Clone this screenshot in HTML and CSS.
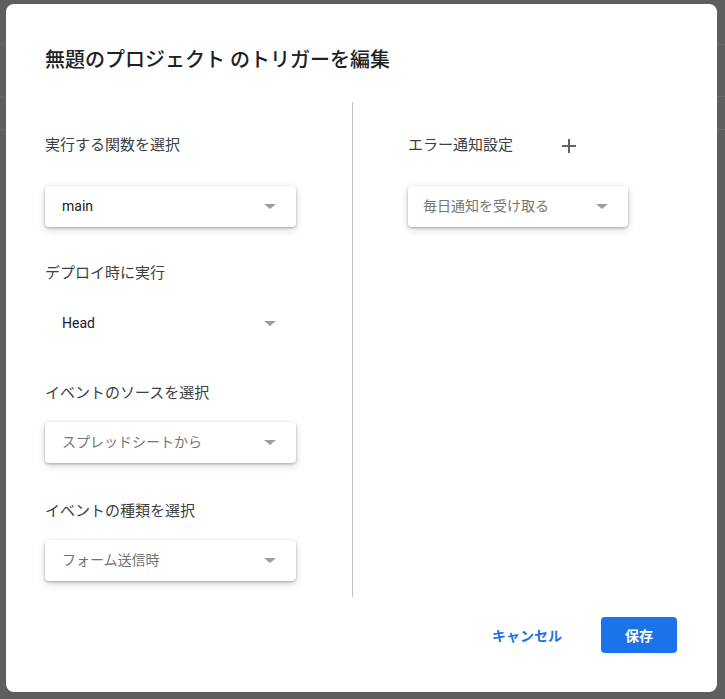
FILE: index.html
```html
<!DOCTYPE html>
<html lang="ja">
<head>
<meta charset="utf-8">
<title>トリガーを編集</title>
<link rel="stylesheet" href="styles.css">
</head>
<body>
<div class="dialog">
  <h1 class="title">無題のプロジェクト のトリガーを編集</h1>
  <div class="columns">
    <div class="col col-left">
      <div class="label-row first"><span class="label-text">実行する関数を選択</span></div>
      <div class="select raised gap-20"><span class="value">main</span><span class="arrow"></span></div>

      <div class="label gap-34">デプロイ時に実行</div>
      <div class="select flat gap-18"><span class="value">Head</span><span class="arrow"></span></div>

      <div class="label gap-37">イベントのソースを選択</div>
      <div class="select raised gap-17"><span class="value muted">スプレッドシートから</span><span class="arrow"></span></div>

      <div class="label gap-36">イベントの種類を選択</div>
      <div class="select raised gap-17"><span class="value muted">フォーム送信時</span><span class="arrow"></span></div>
    </div>
    <div class="col col-right">
      <div class="label-row first">
        <span class="label-text">エラー通知設定</span>
        <svg class="plus" width="16" height="16" viewBox="0 0 16 16" aria-hidden="true">
          <path d="M8 1v14M1 8h14" stroke="#5f6368" stroke-width="2" fill="none"/>
        </svg>
      </div>
      <div class="select raised narrow gap-20"><span class="value muted">毎日通知を受け取る</span><span class="arrow"></span></div>
    </div>
  </div>
  <div class="footer">
    <button class="btn btn-text">キャンセル</button>
    <button class="btn btn-primary">保存</button>
  </div>
</div>
</body>
</html>
```
FILE: styles.css
```css
html, body {
  margin: 0;
  padding: 0;
}
body {
  width: 725px;
  height: 699px;
  box-sizing: border-box;
  padding: 4px 8px 7px 6px;
  background-color: #5e5e5e;
  background-image:
    linear-gradient(to bottom, transparent 44px, #6a6a6a 44px, #6a6a6a 45px, transparent 45px),
    linear-gradient(to bottom, transparent 96px, #6a6a6a 96px, #6a6a6a 97px, transparent 97px),
    linear-gradient(to bottom, transparent 129px, #6a6a6a 129px, #6a6a6a 130px, transparent 130px);
  font-family: Roboto, "Noto Sans CJK JP", sans-serif;
  overflow: hidden;
}
.dialog {
  width: 711px;
  height: 688px;
  box-sizing: border-box;
  background: #fff;
  border-radius: 8px;
  padding: 42px 40px 39px 39px;
  display: flex;
  flex-direction: column;
}
.title {
  margin: 0;
  font-size: 20px;
  line-height: 28px;
  font-weight: 500;
  color: #202124;
}
.columns {
  margin-top: 28px;
  display: flex;
}
.col-left {
  width: 307px;
  border-right: 1px solid #c4c4c4;
  padding-bottom: 16px;
}
.col-right {
  padding-left: 55px;
}
.label-row {
  height: 40px;
  display: flex;
  align-items: center;
  font-size: 15px;
  color: #3c4043;
}
.label-row.first {
  margin-top: 24px;
}
.label-text {
  padding-bottom: 5px;
}
.plus {
  margin-left: 48px;
}
.label {
  font-size: 15px;
  line-height: 24px;
  color: #3c4043;
}
.select {
  width: 251px;
  height: 41px;
  box-sizing: border-box;
  padding: 0 20px 0 17px;
  display: flex;
  align-items: center;
  justify-content: space-between;
  border-radius: 4px;
  background: #fff;
  font-size: 14px;
}
.select.narrow {
  width: 220px;
  padding-left: 15px;
}
.raised {
  box-shadow: 0 1px 3px rgba(0, 0, 0, 0.28), 0 3px 8px rgba(0, 0, 0, 0.14);
}
.value {
  color: #202124;
  padding-bottom: 2px;
}
.value.muted {
  color: #757575;
  padding-bottom: 4px;
}
.arrow {
  width: 0;
  height: 0;
  border-left: 6px solid transparent;
  border-right: 6px solid transparent;
  border-top: 5px solid #9e9e9e;
}
.gap-17 { margin-top: 17px; }
.gap-18 { margin-top: 18px; }
.gap-20 { margin-top: 20px; }
.gap-34 { margin-top: 34px; }
.gap-36 { margin-top: 36px; }
.gap-37 { margin-top: 37px; }
.footer {
  margin-top: 20px;
  display: flex;
  justify-content: flex-end;
  align-items: center;
  gap: 31px;
}
.btn {
  font-family: Roboto, "Noto Sans CJK JP", sans-serif;
  font-size: 14px;
  font-weight: 700;
  height: 36px;
  border: none;
  border-radius: 4px;
  cursor: pointer;
}
.btn-text {
  background: transparent;
  color: #1a73e8;
  padding: 0 8px;
}
.btn-primary {
  background: #1a73e8;
  color: #fff;
  padding: 0 24px;
  width: 76px;
}
```
